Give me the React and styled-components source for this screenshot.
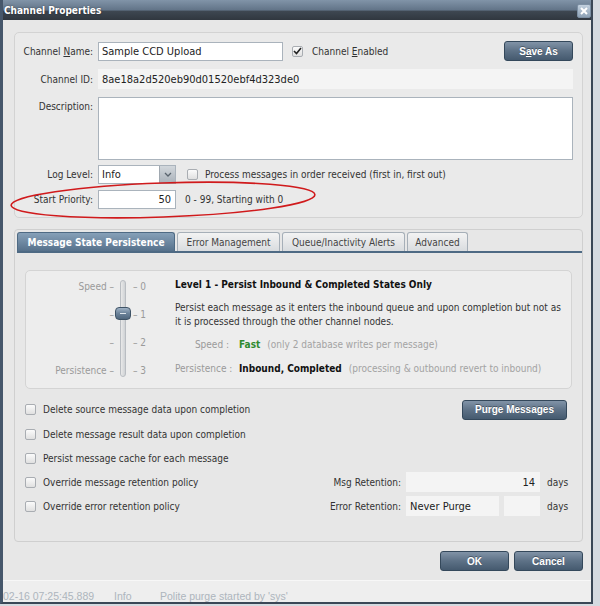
import styled, { createGlobalStyle } from "styled-components";

const GlobalStyle = createGlobalStyle`
  html, body {
    margin: 0;
    padding: 0;
  }
  body {
    background: #d5dae0;
    font-family: "DejaVu Sans Condensed", "DejaVu Sans", sans-serif;
    font-stretch: condensed;
    font-size: 10px;
    color: #333;
  }
`;

const Page = styled.div`
  position: relative;
  width: 600px;
  height: 606px;
  overflow: hidden;
`;

const Window = styled.div`
  width: 588px;
  height: 602px;
  border-left: 3px solid #46576b;
  border-right: 2px solid #3a4756;
  border-bottom: 2px solid #3a4756;
  display: flex;
  flex-direction: column;
  background: #e7e7e7;
`;

const TitleBar = styled.div`
  height: 20px;
  flex: none;
  display: flex;
  align-items: center;
  justify-content: space-between;
  padding-left: 1px;
  background: linear-gradient(#8194a8 0%, #627488 50%, #3e4751 56%, #30373f 100%);
`;

const Title = styled.span`
  color: #fff;
  font-weight: bold;
  font-size: 10px;
  text-shadow: 0 0 2px rgba(0, 0, 0, 0.5);
`;

const CloseBox = styled.div`
  width: 12px;
  height: 12px;
  margin-top: 1px;
  border-radius: 2px;
  border: 1px solid #7d90a4;
  background: linear-gradient(#c2d0de, #8ea2b6);
  display: flex;
  align-items: center;
  justify-content: center;
`;

const Body = styled.div`
  flex: 1;
  display: flex;
  flex-direction: column;
  padding: 12px 8px 0 11px;
`;

const Panel = styled.div`
  box-sizing: border-box;
  height: 186px;
  border: 1px solid #d3d3d3;
  border-radius: 5px;
  background: #eaeaea;
  padding: 8px 9px 0 0;
`;

const Row = styled.div`
  display: flex;
  align-items: ${(p) => (p.$top ? "flex-start" : "center")};
  height: ${(p) => p.$h}px;
  margin-top: ${(p) => p.$mt || 0}px;
`;

const Label = styled.label`
  width: 78px;
  margin-right: 5px;
  text-align: right;
  flex: none;
  padding-top: ${(p) => p.$pt || 0}px;
  white-space: nowrap;
`;

const TextInput = styled.div`
  box-sizing: border-box;
  width: ${(p) => p.$w}px;
  height: ${(p) => p.$h || 19}px;
  border: 1px solid ${(p) => (p.$flat ? "transparent" : "#aab3bc")};
  background: ${(p) => (p.$flat ? "#f4f4f4" : "#fff")};
  padding: 0 4px 0 3px;
  display: flex;
  align-items: center;
  justify-content: ${(p) => (p.$right ? "flex-end" : "flex-start")};
  font-size: 11px;
  color: #222;
  flex: none;
  white-space: nowrap;
`;

const Select = styled.div`
  box-sizing: border-box;
  width: 78px;
  height: 19px;
  border: 1px solid #aab3bc;
  background: #fff;
  display: flex;
  font-size: 11px;
  color: #222;
`;

const SelectValue = styled.div`
  flex: 1;
  padding-left: 3px;
  display: flex;
  align-items: center;
`;

const SelectArrow = styled.div`
  width: 15px;
  background: linear-gradient(#d2d7dc, #aab2ba);
  border-left: 1px solid #a0a8b0;
  display: flex;
  align-items: center;
  justify-content: center;
`;

const Check = styled.span`
  box-sizing: border-box;
  width: 11px;
  height: 11px;
  flex: none;
  border: 1px solid #a9adb2;
  border-radius: 2px;
  background: linear-gradient(#fbfbfb, #e0e0e0);
  display: inline-flex;
  align-items: center;
  justify-content: center;
  margin-left: ${(p) => p.$ml || 0}px;
  margin-right: ${(p) => p.$mr || 7}px;
`;

const Button = styled.button`
  box-sizing: border-box;
  width: ${(p) => p.$w}px;
  height: 20px;
  padding: 0;
  border: 1px solid #34485b;
  border-radius: 3px;
  background: linear-gradient(#8193a7 0%, #5d7186 50%, #455a6f 100%);
  color: #fff;
  font-family: "Liberation Sans", Arial, sans-serif;
  font-weight: bold;
  font-size: 10px;
  text-shadow: 0 -1px 0 rgba(0, 0, 0, 0.35);
  flex: none;
  margin-left: ${(p) => (p.$auto ? "auto" : "0")};
`;

const Hint = styled.span`
  margin-left: ${(p) => p.$ml || 0}px;
  white-space: nowrap;
`;

const TabPane = styled.div`
  box-sizing: border-box;
  height: 313px;
  margin-top: 11px;
  border: 1px solid #cfcfcf;
  border-radius: 4px;
  background: #e7e7e7;
  display: flex;
  flex-direction: column;
`;

const TabStrip = styled.div`
  display: flex;
  gap: 2px;
  margin: 2px 0 0 2px;
  height: 19px;
  border-bottom: 2px solid #4e6a84;
`;

const Tab = styled.div`
  box-sizing: border-box;
  width: ${(p) => p.$w}px;
  height: 19px;
  border: 1px solid ${(p) => (p.$active ? "#4e6a84" : "#a6afb8")};
  border-bottom: none;
  border-radius: 3px 3px 0 0;
  background: ${(p) =>
    p.$active
      ? "linear-gradient(#86a0b8, #56718b)"
      : "linear-gradient(#f3f3f3, #d9dcdf)"};
  color: ${(p) => (p.$active ? "#fff" : "#444")};
  font-weight: ${(p) => (p.$active ? "bold" : "normal")};
  display: flex;
  align-items: center;
  justify-content: center;
  white-space: nowrap;
`;

const LevelBox = styled.div`
  box-sizing: border-box;
  height: 119px;
  margin: 17px 10px 0 10px;
  border: 1px solid #d4d4d4;
  border-radius: 5px;
  background: #ededed;
  display: flex;
`;

const Scale = styled.div`
  display: grid;
  grid-template-columns: 88px 18px 40px;
  grid-template-rows: repeat(4, 28px);
  padding-top: 1px;
  color: #9a9a9a;
`;

const ScaleLeft = styled.div`
  grid-column: 1;
  grid-row: ${(p) => p.$row};
  display: flex;
  align-items: center;
  justify-content: flex-end;
  white-space: nowrap;
`;

const ScaleRight = styled.div`
  grid-column: 3;
  grid-row: ${(p) => p.$row};
  display: flex;
  align-items: center;
  padding-left: 1px;
`;

const Track = styled.div`
  grid-column: 2;
  grid-row: 1 / 5;
  position: relative;
`;

const TrackBar = styled.div`
  position: absolute;
  left: 6px;
  top: 8px;
  width: 6px;
  height: 97px;
  box-sizing: border-box;
  border: 1px solid #b9bdc2;
  border-radius: 3px;
  background: linear-gradient(90deg, #e9e9e9, #cfd2d5);
`;

const Thumb = styled.div`
  position: absolute;
  left: 1px;
  top: 35px;
  width: 16px;
  height: 13px;
  box-sizing: border-box;
  border: 1px solid #3f5366;
  border-radius: 4px;
  background: linear-gradient(#9fb2c5 0%, #6b8299 50%, #4f667d 100%);
  &::after {
    content: "";
    position: absolute;
    left: 4px;
    right: 4px;
    top: 5px;
    height: 1px;
    background: #dfe6ec;
  }
`;

const Details = styled.div`
  margin-left: 3px;
  padding-top: 7px;
  line-height: 14px;
  color: #333;
  white-space: nowrap;
`;

const LevelTitle = styled.div`
  font-weight: bold;
  color: #111;
`;

const LevelText = styled.div`
  margin-top: 9px;
`;

const KV = styled.div`
  display: flex;
  margin-top: ${(p) => p.$mt}px;
`;

const KLabel = styled.span`
  width: 54px;
  text-align: right;
  color: #9a9a9a;
`;

const KValue = styled.span`
  margin-left: 10px;
  font-weight: bold;
  color: ${(p) => p.$color || "#111"};
`;

const KNote = styled.span`
  margin-left: 7px;
  color: #a3a3a3;
`;

const Options = styled.div`
  margin: 8px 15px 0 10px;
  display: flex;
  flex-direction: column;
`;

const OptRow = styled.div`
  display: flex;
  align-items: center;
  height: ${(p) => p.$h || 24}px;
`;

const RightGroup = styled.div`
  margin-left: auto;
  display: flex;
  align-items: center;
`;

const FieldLabel = styled.span`
  margin-right: 5px;
  white-space: nowrap;
`;

const Days = styled.span`
  width: 20px;
  margin-left: 7px;
  text-align: right;
`;

const Gap = styled.span`
  width: ${(p) => p.$w}px;
`;

const Footer = styled.div`
  display: flex;
  justify-content: flex-end;
  gap: 5px;
  margin-top: 9px;
`;

const LogStrip = styled.div`
  height: 22px;
  flex: none;
  box-sizing: border-box;
  border-top: 1px solid #f7f7f7;
  background: #eeeeee;
  padding-top: 9px;
  overflow: hidden;
  display: flex;
  font-family: "Liberation Sans", Arial, sans-serif;
  font-size: 10.5px;
  color: #adb5bd;
  white-space: nowrap;
`;

const LogCell = styled.span`
  width: ${(p) => p.$w}px;
`;

const Annotation = styled.svg`
  position: absolute;
  left: 0;
  top: 0;
  pointer-events: none;
`;

const CheckMark = () => (
  <svg width="9" height="8" viewBox="0 0 9 8">
    <path d="M1 4 L3.5 6.5 L8 1" fill="none" stroke="#222" strokeWidth="1.6" />
  </svg>
);

const levels = [
  { left: "Speed –", right: "– 0" },
  { left: "–", right: "– 1" },
  { left: "–", right: "– 2" },
  { left: "Persistence –", right: "– 3" },
];

export default function App() {
  return (
    <Page>
      <GlobalStyle />
      <Window>
        <TitleBar>
          <Title>Channel Properties</Title>
          <CloseBox>
            <svg width="8" height="8" viewBox="0 0 8 8">
              <path d="M1 1 L7 7 M7 1 L1 7" stroke="#fff" strokeWidth="2" />
            </svg>
          </CloseBox>
        </TitleBar>
        <Body>
          <Panel>
            <Row $h={20}>
              <Label>
                Channel <u>N</u>ame:
              </Label>
              <TextInput $w={185}>Sample CCD Upload</TextInput>
              <Check $ml={9} $mr={9}>
                <CheckMark />
              </Check>
              <Hint>
                Channel <u>E</u>nabled
              </Hint>
              <Button $w={69} $auto>
                S<u>a</u>ve As
              </Button>
            </Row>
            <Row $h={20} $mt={8}>
              <Label>Channel ID:</Label>
              <TextInput $w={475} $h={20} $flat>
                8ae18a2d520eb90d01520ebf4d323de0
              </TextInput>
            </Row>
            <Row $h={63} $mt={8} $top>
              <Label $pt={4}>Description:</Label>
              <TextInput $w={475} $h={63} />
            </Row>
            <Row $h={19} $mt={5}>
              <Label>Log Level:</Label>
              <Select>
                <SelectValue>Info</SelectValue>
                <SelectArrow>
                  <svg width="8" height="5" viewBox="0 0 8 5">
                    <path d="M1 1 L4 4 L7 1" fill="none" stroke="#5a646e" strokeWidth="1.3" />
                  </svg>
                </SelectArrow>
              </Select>
              <Check $ml={11} />
              <Hint>Process messages in order received (first in, first out)</Hint>
            </Row>
            <Row $h={19} $mt={6}>
              <Label>Start Priority:</Label>
              <TextInput $w={78} $right>
                50
              </TextInput>
              <Hint $ml={9}>0 - 99, Starting with 0</Hint>
            </Row>
          </Panel>

          <TabPane>
            <TabStrip>
              <Tab $w={158} $active>
                Message State Persistence
              </Tab>
              <Tab $w={103}>Error Management</Tab>
              <Tab $w={123}>Queue/Inactivity Alerts</Tab>
              <Tab $w={61}>Advanced</Tab>
            </TabStrip>

            <LevelBox>
              <Scale>
                {levels.map((l, i) => (
                  <ScaleLeft key={"l" + i} $row={i + 1}>
                    {l.left}
                  </ScaleLeft>
                ))}
                <Track>
                  <TrackBar />
                  <Thumb />
                </Track>
                {levels.map((l, i) => (
                  <ScaleRight key={"r" + i} $row={i + 1}>
                    {l.right}
                  </ScaleRight>
                ))}
              </Scale>
              <Details>
                <LevelTitle>Level 1 - Persist Inbound &amp; Completed States Only</LevelTitle>
                <LevelText>
                  Persist each message as it enters the inbound queue and upon completion but not as
                  <br />
                  it is processed through the other channel nodes.
                </LevelText>
                <KV $mt={9}>
                  <KLabel>Speed :</KLabel>
                  <KValue $color="#2f8a2f">Fast</KValue>
                  <KNote>(only 2 database writes per message)</KNote>
                </KV>
                <KV $mt={10}>
                  <KLabel>Persistence :</KLabel>
                  <KValue>Inbound, Completed</KValue>
                  <KNote>(processing &amp; outbound revert to inbound)</KNote>
                </KV>
              </Details>
            </LevelBox>

            <Options>
              <OptRow $h={25}>
                <Check />
                <span>Delete source message data upon completion</span>
                <RightGroup>
                  <Button $w={105}>Purge Messages</Button>
                </RightGroup>
              </OptRow>
              <OptRow>
                <Check />
                <span>Delete message result data upon completion</span>
              </OptRow>
              <OptRow>
                <Check />
                <span>Persist message cache for each message</span>
              </OptRow>
              <OptRow>
                <Check />
                <span>Override message retention policy</span>
                <RightGroup>
                  <FieldLabel>Msg Retention:</FieldLabel>
                  <TextInput $w={134} $h={20} $flat $right>
                    14
                  </TextInput>
                  <Days>days</Days>
                </RightGroup>
              </OptRow>
              <OptRow>
                <Check />
                <span>Override error retention policy</span>
                <RightGroup>
                  <FieldLabel>Error Retention:</FieldLabel>
                  <TextInput $w={93} $h={20} $flat>
                    Never Purge
                  </TextInput>
                  <Gap $w={5} />
                  <TextInput $w={36} $h={20} $flat />
                  <Days>days</Days>
                </RightGroup>
              </OptRow>
            </Options>
          </TabPane>

          <Footer>
            <Button $w={69}>OK</Button>
            <Button $w={69}>Cancel</Button>
          </Footer>
        </Body>
        <LogStrip>
          <LogCell $w={111}>02-16 07:25:45.889</LogCell>
          <LogCell $w={46}>Info</LogCell>
          <LogCell>Polite purge started by 'sys'</LogCell>
        </LogStrip>
      </Window>
      <Annotation width="600" height="606">
        <ellipse
          cx="163"
          cy="200"
          rx="152"
          ry="17"
          transform="rotate(-2 163 200)"
          fill="none"
          stroke="#d01a1c"
          strokeWidth="1.6"
        />
      </Annotation>
    </Page>
  );
}
